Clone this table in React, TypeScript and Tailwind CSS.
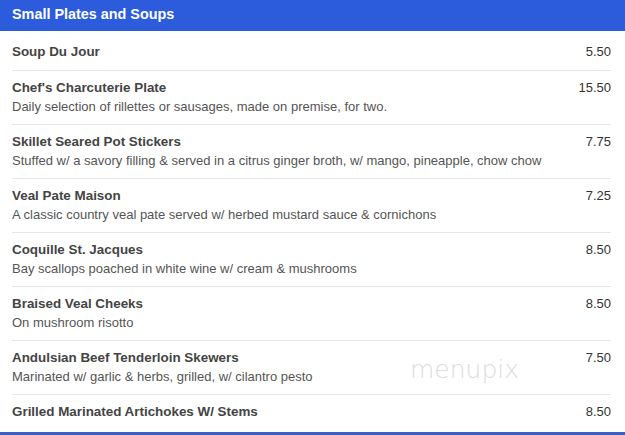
import React from "react";

const items: { name: string; desc?: string; price: string }[] = [
  { name: "Soup Du Jour", price: "5.50" },
  { name: "Chef's Charcuterie Plate", desc: "Daily selection of rillettes or sausages, made on premise, for two.", price: "15.50" },
  { name: "Skillet Seared Pot Stickers", desc: "Stuffed w/ a savory filling & served in a citrus ginger broth, w/ mango, pineapple, chow chow", price: "7.75" },
  { name: "Veal Pate Maison", desc: "A classic country veal pate served w/ herbed mustard sauce & cornichons", price: "7.25" },
  { name: "Coquille St. Jacques", desc: "Bay scallops poached in white wine w/ cream & mushrooms", price: "8.50" },
  { name: "Braised Veal Cheeks", desc: "On mushroom risotto", price: "8.50" },
  { name: "Andulsian Beef Tenderloin Skewers", desc: "Marinated w/ garlic & herbs, grilled, w/ cilantro pesto", price: "7.50" },
  { name: "Grilled Marinated Artichokes W/ Stems", price: "8.50" },
];

export default function App() {
  return (
    <div className="relative w-[625px] h-[435px] bg-white overflow-hidden flex flex-col" style={{ fontFamily: '"Liberation Sans", Arial, sans-serif' }}>
      <div className="h-[31px] bg-[#2c5cdb] flex items-center px-3 shrink-0">
        <span className="text-white font-bold text-[14.4px] leading-[16px] -mt-[3px]">Small Plates and Soups</span>
      </div>
      <div className="flex-1 flex flex-col pl-3 pr-[14px]">
        {items.map((it, i) => (
          <div
            key={i}
            className={
              "flex justify-between " +
              (i === 0 ? "pt-[13px] pb-[10px] " : "pt-[9px] pb-[9px] ") +
              (i < items.length - 1 ? "border-b border-[#e6e6e6]" : "")
            }
          >
            <div className="flex flex-col gap-[3px]">
              <div className="text-[13.4px] leading-[16px] font-bold text-[#444]">{it.name}</div>
              {it.desc && <div className="text-[13px] leading-[16px] text-[#555]">{it.desc}</div>}
            </div>
            <div className="text-[13px] leading-[16px] text-[#333]">{it.price}</div>
          </div>
        ))}
      </div>
      <div className="h-[3px] bg-[#3b5fc0] shrink-0" />
      <div
        className="absolute left-[410px] top-[356px] text-[25px] leading-[28px] text-[#dcdcdc] font-extralight"
        style={{ fontFamily: '"DejaVu Sans", sans-serif' }}
      >
        menupix
      </div>
    </div>
  );
}
